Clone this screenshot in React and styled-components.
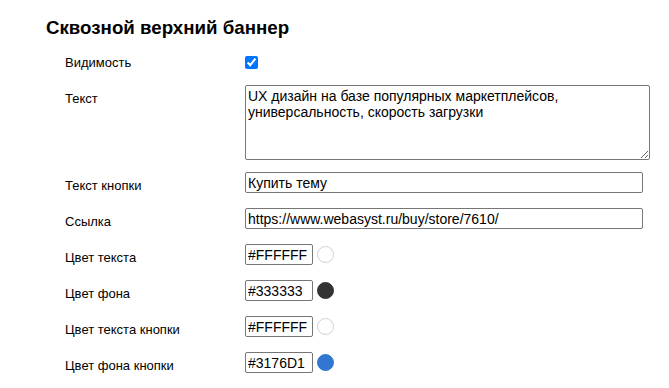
import React from 'react';
import styled, { createGlobalStyle } from 'styled-components';

const GlobalStyle = createGlobalStyle`
  body {
    margin: 0;
    background: #fff;
    font-family: "Liberation Sans", Arial, sans-serif;
    color: #000;
  }
`;

const Page = styled.div`
  padding: 17px 0 0 46px;
`;

const Title = styled.h3`
  margin: 0 0 17px;
  font-size: 18.72px;
  line-height: 21px;
  font-weight: bold;
`;

const Form = styled.div`
  display: flex;
  flex-direction: column;
  padding-left: 19px;
`;

const Row = styled.div`
  display: grid;
  grid-template-columns: 180px 1fr;
  align-items: start;
  padding-bottom: ${p => p.$space ?? 15}px;
`;

const Label = styled.div`
  font-size: 13px;
  line-height: 15px;
  padding-top: ${p => p.$offset ?? 6}px;
`;

const Field = styled.div`
  display: flex;
  align-items: center;
  gap: 4px;
`;

const Checkbox = styled.input`
  margin: 1px 0 0;
  width: 13px;
  height: 13px;
`;

const baseControl = `
  box-sizing: border-box;
  font-family: "Liberation Sans", Arial, sans-serif;
  font-size: 14px;
  color: #000;
  border: 1px solid #767676;
  border-radius: 2px;
  background: #fff;
  display: block;
  margin: 0;
`;

const TextArea = styled.textarea`
  ${baseControl}
  width: 405px;
  height: 75px;
  padding: 2px;
  line-height: 16px;
  resize: vertical;
`;

const TextInput = styled.input`
  ${baseControl}
  width: ${p => p.$width}px;
  height: 21px;
  padding: 1px 2px;
`;

const Swatch = styled.span`
  box-sizing: border-box;
  width: 17px;
  height: 17px;
  border-radius: 50%;
  background: ${p => p.$color};
  border: 1px solid ${p => (p.$color === '#FFFFFF' ? '#d0d0d0' : p.$color)};
`;

const colors = [
  { label: 'Цвет текста', value: '#FFFFFF' },
  { label: 'Цвет фона', value: '#333333' },
  { label: 'Цвет текста кнопки', value: '#FFFFFF' },
  { label: 'Цвет фона кнопки', value: '#3176D1' },
];

export default function App() {
  return (
    <Page>
      <GlobalStyle />
      <Title>Сквозной верхний баннер</Title>
      <Form>
        <Row>
          <Label $offset={0}>Видимость</Label>
          <Field>
            <Checkbox type="checkbox" defaultChecked />
          </Field>
        </Row>
        <Row $space={12}>
          <Label>Текст</Label>
          <TextArea defaultValue="UX дизайн на базе популярных маркетплейсов, универсальность, скорость загрузки" />
        </Row>
        <Row>
          <Label>Текст кнопки</Label>
          <TextInput $width={398} defaultValue="Купить тему" />
        </Row>
        <Row>
          <Label>Ссылка</Label>
          <TextInput $width={398} defaultValue="https://www.webasyst.ru/buy/store/7610/" />
        </Row>
        {colors.map(c => (
          <Row key={c.label}>
            <Label>{c.label}</Label>
            <Field>
              <TextInput $width={68} defaultValue={c.value} />
              <Swatch $color={c.value} />
            </Field>
          </Row>
        ))}
      </Form>
    </Page>
  );
}
